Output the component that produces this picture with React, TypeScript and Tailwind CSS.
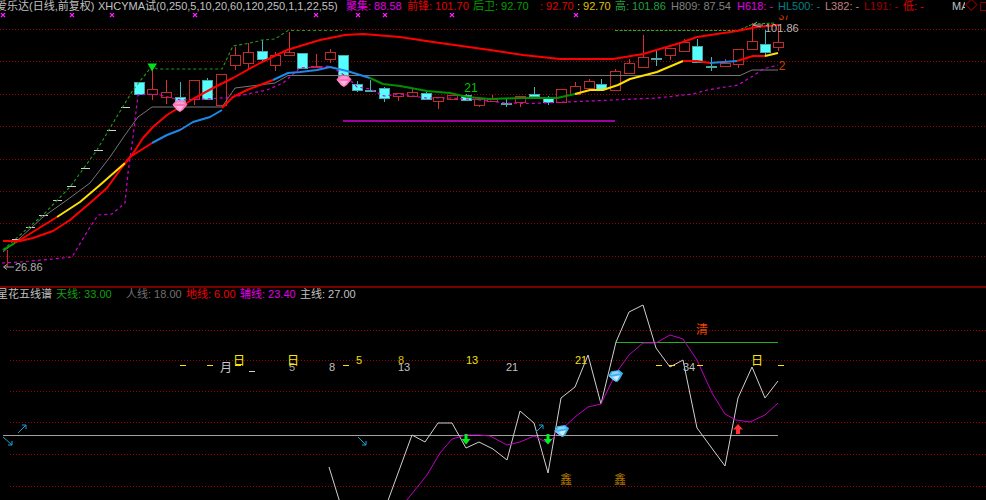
type P = [number, number];
const pts = (a: P[]) => a.map((p) => p.join(",")).join(" ");

const topGrid = [29.5, 61.5, 94.5, 126.5, 159.5, 191.5, 223.5, 256.5];
const lowGrid = [330.5, 360.5, 391.5, 422.5, 454.5, 486.5];

// x, high, low, bodyTop, bodyBottom, up (red hollow) or down (cyan solid)
const candles: [number, number, number, number, number, 0 | 1][] = [
  [139, 82, 94, 82, 94, 0],
  [152, 68, 100, 89, 94, 1],
  [166, 80, 104, 92, 97, 1],
  [180, 82, 106, 97, 105, 0],
  [194, 80, 105, 80, 99, 1],
  [207, 78, 100, 80, 99, 0],
  [221, 74, 105, 74, 105, 1],
  [235, 47, 70, 55, 65, 1],
  [248, 43, 69, 52, 63, 1],
  [262, 40, 62, 51, 59, 0],
  [275, 52, 71, 55, 65, 1],
  [289, 32, 55, 52, 55, 1],
  [302, 53, 68, 53, 68, 0],
  [316, 54, 68, 66, 67, 1],
  [330, 49, 63, 52, 59, 1],
  [343, 55, 78, 55, 78, 0],
  [357, 81, 92, 84, 90, 0],
  [370, 80, 92, 90, 91, 0],
  [384, 87, 102, 88, 98, 0],
  [398, 93, 101, 93, 96, 1],
  [412, 89, 96, 92, 96, 1],
  [426, 90, 100, 93, 99, 0],
  [438, 97, 109, 97, 101, 1],
  [452, 95, 99, 95, 99, 1],
  [466, 94, 101, 95, 100, 0],
  [479, 99, 107, 99, 105, 1],
  [492, 95, 102, 99, 101, 1],
  [506, 98, 107, 103, 104, 0],
  [520, 96, 107, 96, 102, 1],
  [534, 87, 96, 94, 96, 0],
  [548, 96, 105, 97, 102, 0],
  [561, 89, 102, 89, 102, 1],
  [575, 82, 94, 86, 94, 1],
  [589, 79, 88, 81, 88, 1],
  [601, 79, 90, 84, 89, 0],
  [615, 69, 90, 71, 90, 1],
  [629, 59, 73, 63, 73, 1],
  [643, 35, 67, 57, 67, 1],
  [656, 51, 66, 58, 59, 0],
  [670, 48, 60, 48, 55, 1],
  [684, 39, 52, 42, 51, 1],
  [697, 39, 62, 46, 62, 0],
  [711, 57, 71, 66, 67, 0],
  [725, 59, 67, 63, 66, 1],
  [738, 49, 68, 49, 64, 1],
  [752, 23, 49, 41, 49, 1],
  [765, 30, 55, 44, 52, 0],
  [778, 24, 51, 42, 47, 1],
];

const ticks: P[] = [
  [125, 107], [111, 130], [98, 150], [85, 168], [71, 186], [57, 200], [43, 215], [30, 227], [16, 239],
];

const thick: [string, P[]][] = [
  ["#ff0000", [[3, 241], [20, 241], [33, 238], [53, 231], [70, 220], [90, 203], [107, 188], [120, 170], [132, 155], [143, 138], [153, 127], [167, 115], [180, 107], [193, 99], [213, 88], [233, 78], [260, 63], [287, 50], [320, 40], [345, 35], [363, 34], [400, 37], [433, 42], [490, 50], [523, 55], [560, 59], [613, 59], [643, 54], [680, 43], [697, 37], [737, 31], [757, 27], [778, 25]]],
  ["#00a000", [[3, 250], [15, 243]]],
  ["#ff0000", [[15, 243], [57, 217]]],
  ["#ffe000", [[57, 217], [80, 202], [100, 185], [125, 163]]],
  ["#ff0000", [[125, 163], [130, 157], [152, 143]]],
  ["#1e88e5", [[152, 143], [167, 135], [180, 130], [193, 122], [210, 117], [222, 110]]],
  ["#ff0000", [[222, 108], [233, 97], [247, 90], [273, 80]]],
  ["#1e88e5", [[273, 80], [288, 73], [300, 72], [317, 70], [330, 67], [347, 71], [370, 78]]],
  ["#008f00", [[370, 78], [383, 84], [400, 86], [427, 91], [450, 93], [467, 97], [490, 99], [520, 98], [540, 98], [557, 98], [575, 94]]],
  ["#ffe000", [[575, 94], [590, 90], [603, 90], [618, 85], [630, 79], [657, 72], [683, 61]]],
  ["#ff0000", [[683, 61], [697, 61], [710, 63]]],
  ["#1e88e5", [[710, 63], [737, 61]]],
  ["#ff0000", [[737, 61], [753, 56], [765, 56]]],
  ["#ffe000", [[765, 56], [778, 53]]],
];

const grayLine: P[] = [[3, 252], [20, 238], [43, 217], [67, 200], [90, 183], [110, 157], [125, 135], [138, 117], [152, 107], [222, 107], [235, 88], [275, 83], [288, 75.5], [740, 75.5], [752, 70], [778, 70]];
const greenDash: P[] = [[3, 250], [20, 235], [43, 215], [70, 187], [97, 150], [113, 123], [133, 90], [152, 66], [157, 69], [222, 69], [233, 46], [250, 43], [262, 40], [275, 39], [288, 30.5], [342, 30.5]];
const greenDash2: P[] = [[615, 30.5], [738, 30.5], [746, 27], [753, 24], [775, 23]];
const magentaDash: P[] = [[2, 263], [20, 262], [43, 260], [72, 257], [90, 227], [98, 215], [112, 214], [125, 203], [128, 173], [133, 137], [138, 95], [152, 94], [160, 95], [180, 100], [207, 99], [233, 97], [267, 90], [283, 83], [300, 68], [317, 67], [330, 66], [347, 77], [357, 87], [370, 89], [384, 96], [400, 94], [426, 98], [450, 98], [480, 100], [506, 103], [530, 103.5], [567, 102], [613, 100], [657, 98], [693, 94], [707, 90], [738, 85], [753, 76], [763, 69], [778, 65]];

const whiteLine1: P[] = [[329, 467], [341, 506]];
const whiteLine2: P[] = [[386, 506], [412, 435], [425, 442], [438, 423], [452, 423], [466, 448], [479, 442], [493, 449], [507, 460], [520, 411], [534, 423], [548, 473], [561, 398], [575, 387], [588, 355], [601, 404], [616, 342], [629, 312], [643, 305], [656, 348], [670, 367], [683, 360], [697, 428], [725, 466], [738, 398], [752, 367], [765, 398], [778, 381]];
const magentaLine: P[] = [[402, 506], [427, 475], [440, 453], [452, 439], [466, 435], [479, 435], [490, 436], [507, 445], [520, 442], [534, 436], [548, 443], [561, 430], [575, 417], [588, 407], [601, 404], [616, 373], [629, 355], [643, 343], [656, 343], [670, 335], [683, 339], [697, 360], [712, 393], [725, 414], [736, 420], [750, 422], [765, 415], [778, 403]];

const crosses = [3, 72, 112, 195, 316, 358, 385, 452, 576];

function Gem({ x, y, light, mid, dark, tilt = 0 }: { x: number; y: number; light: string; mid: string; dark: string; tilt?: number }) {
  return (
    <g transform={`translate(${x} ${y}) rotate(${tilt})`}>
      <polygon points="-7.5,-1.5 -4,-5.5 4,-5.5 7.5,-1.5 3,4 0,6 -3,4" fill={mid} />
      <polygon points="-5,-2 -2.5,-4.5 2.5,-4.5 5,-2" fill={dark} />
      <polygon points="-4,0 4,0 0,5" fill={light} opacity="0.9" />
      <polygon points="-7.5,-1.5 -4,0 0,6 -3,4" fill={dark} />
    </g>
  );
}

function Arrow({ d }: { d: string }) {
  return <path d={d} fill="none" stroke="#12a5d8" strokeWidth="1" />;
}

function Legend({ children, w, className }: { children: string; w: number; className: string }) {
  return (
    <span className={`shrink-0 whitespace-nowrap ${className}`} style={{ width: w }}>
      {children}
    </span>
  );
}

function Grid({ ys, x0 }: { ys: number[]; x0: number }) {
  return (
    <g shapeRendering="crispEdges">
      {ys.map((y) => (
        <line key={y} x1={x0} x2={986} y1={y} y2={y} stroke="#a00000" strokeWidth="1" strokeDasharray="1 2" />
      ))}
    </g>
  );
}

function Glyph({ x, y, c, className }: { x: number; y: number; c: string; className: string }) {
  return (
    <text x={x} y={y} textAnchor="middle" className={className}>
      {c}
    </text>
  );
}

export default function App() {
  return (
    <div className="w-[986px] h-[500px] bg-black overflow-hidden flex flex-col font-['Liberation_Sans','Noto_Sans_CJK_SC',sans-serif] text-[11px] leading-[13px]">
      <div className="h-[286px] flex flex-col">
        <div className="h-[13px] flex shrink-0">
          <Legend w={102} className="ml-[-4px] text-[#c0c0c0]">爱乐达(日线,前复权)</Legend>
          <Legend w={248} className="text-[#c0c0c0]">XHCYMA试(0,250,5,10,20,60,120,250,1,1,22,55)</Legend>
          <Legend w={61} className="text-[#e000e0]">聚集: 88.58</Legend>
          <Legend w={66} className="text-[#e00000]">前锋: 101.70</Legend>
          <Legend w={67} className="text-[#00a000]">后卫: 92.70</Legend>
          <Legend w={37} className="text-[#e00000]">: 92.70</Legend>
          <Legend w={38} className="text-[#e0c000]">: 92.70</Legend>
          <Legend w={56} className="text-[#20a040]">高: 101.86</Legend>
          <Legend w={66} className="text-[#808080]">H809: 87.54</Legend>
          <Legend w={41} className="text-[#e000e0]">H618: -</Legend>
          <Legend w={47} className="text-[#008080]">HL500: -</Legend>
          <Legend w={39} className="text-[#c08080]">L382: -</Legend>
          <Legend w={39} className="text-[#a00000]">L191: -</Legend>
          <Legend w={49} className="text-[#e00000]">低: -</Legend>
          <Legend w={13} className="overflow-hidden text-[#c0c0c0]">MA</Legend>
          <Legend w={15} className="text-[12px] text-[#e00000]">◇</Legend>
          <Legend w={6} className="text-[14px] text-[#e00000]">□</Legend>
        </div>
        <svg className="flex-1 w-full" viewBox="0 13 986 273" width="986" height="273">
          <Grid ys={topGrid} x0={0} />
          {crosses.map((x) => (
            <path key={x} d={`M${x - 2} 13 L${x + 2} 17 M${x + 2} 13 L${x - 2} 17`} stroke="#ff20ff" strokeWidth="1.2" />
          ))}
          <g shapeRendering="crispEdges">
            {candles.map(([x, hi, lo, t, b, up], i) => {
              const cx = Math.round(x) + 0.5;
              const color = up ? "#c42a2a" : "#49a8a8";
              return (
                <g key={i}>
                  <line x1={cx} x2={cx} y1={hi} y2={lo} stroke={up ? "#d83030" : "#3fb8b8"} />
                  <rect
                    x={cx - 5}
                    y={t + 0.5}
                    width={10}
                    height={Math.max(b - t, 1)}
                    fill={up ? "#000" : "#55ffff"}
                    stroke={color}
                  />
                </g>
              );
            })}
            {ticks.map(([x, y]) => (
              <line key={x} x1={x - 4.5} x2={x + 4.5} y1={y + 0.5} y2={y + 0.5} stroke="#d0d0d0" />
            ))}
            <line x1={7.5} x2={7.5} y1={250} y2={267} stroke="#d02020" />
          </g>
          <polyline points={pts(grayLine)} fill="none" stroke="#767676" strokeWidth="1" />
          <polyline points={pts(greenDash)} fill="none" stroke="#1f9a1f" strokeWidth="1.1" strokeDasharray="3 2.5" />
          <polyline points={pts(greenDash2)} fill="none" stroke="#20b020" strokeWidth="1" strokeDasharray="3 1.5" />
          <polyline points={pts(magentaDash)} fill="none" stroke="#d000d0" strokeWidth="1.2" strokeDasharray="3 3" />
          {thick.map(([c, p], i) => (
            <polyline key={i} points={pts(p)} fill="none" stroke={c} strokeWidth="2" strokeLinejoin="round" />
          ))}
          <rect x={343} y={120} width={272} height={2} fill="#a000a0" />
          <polygon points="147.5,63.5 157,63.5 152,71.5" fill="#00e020" />
          <Gem x={180} y={106} light="#ffc0e0" mid="#ff70b8" dark="#ff98d0" />
          <Gem x={344} y={81} light="#ffc0e0" mid="#ff70b8" dark="#ff98d0" />
          <text x={471} y={92} textAnchor="middle" className="text-[12px] fill-[#00c000]">21</text>
          <text x={784} y={20} textAnchor="middle" className="text-[10px] fill-[#e04000]">37</text>
          <rect x={776} y={13} width={16} height={2.5} fill="#000" />
          <text x={765} y={32} className="text-[11px] fill-[#b8b8b8]">101.86</text>
          <text x={782} y={70} textAnchor="middle" className="text-[12px] fill-[#d04000]">2</text>
          <path d="M14 267 H4 M7 264.5 L3.5 267 L7 269.5" stroke="#a8a8a8" fill="none" />
          <text x={15} y={271} className="text-[11px] fill-[#b0b0b0]">26.86</text>
          <path d="M761 27 L753 25 L757 22 M753 25 H763" stroke="#a8a8a8" fill="none" />
        </svg>
      </div>
      <div className="h-[2px] shrink-0 bg-[#7a0000]" />
      <div className="h-[13px] flex shrink-0 ml-[-3px]">
        <Legend w={59} className="text-[#c0c0c0]">星花五线谱</Legend>
        <Legend w={70} className="text-[#10a010]">天线: 33.00</Legend>
        <Legend w={60} className="text-[#707070]">人线: 18.00</Legend>
        <Legend w={54} className="text-[#f00000]">地线: 6.00</Legend>
        <Legend w={60} className="text-[#e000e0]">辅线: 23.40</Legend>
        <Legend w={60} className="text-[#c0c0c0]">主线: 27.00</Legend>
      </div>
      <svg className="flex-1 w-full" viewBox="0 301 986 199" width="986" height="199">
        <Grid ys={lowGrid} x0={10} />
        <line x1={3} x2={778} y1={435.5} y2={435.5} stroke="#a0a0a0" shapeRendering="crispEdges" />
        <line x1={616} x2={778} y1={342.5} y2={342.5} stroke="#20b020" shapeRendering="crispEdges" />
        <polyline points={pts(whiteLine1)} fill="none" stroke="#d0d0d0" strokeWidth="1" />
        <polyline points={pts(whiteLine2)} fill="none" stroke="#d0d0d0" strokeWidth="1" />
        <polyline points={pts(magentaLine)} fill="none" stroke="#c000c0" strokeWidth="1" />

        <Arrow d="M18 433 L26 425 M22 425 h4 v4" />
        <Arrow d="M3 437 L12 445 M8 445 h4 v-4" />
        <Arrow d="M358 437 L366 445 M362 445 h4 v-4" />
        <Arrow d="M536 432 L543 425 M539 425 h4 v4" />

        <polygon points="464.5,434 467.5,434 467.5,439 470.5,439 466,444.5 461.5,439 464.5,439" fill="#00f020" />
        <polygon points="546.5,434 549.5,434 549.5,439 552.5,439 548,444.5 543.5,439 546.5,439" fill="#00f020" />
        <polygon points="738,424 743,429.5 740,429.5 740,434 736,434 736,429.5 733,429.5" fill="#ff3030" />

        <Gem x={562} y={431} tilt={-10} light="#d8f2ff" mid="#3fb0f0" dark="#8ad4fa" />
        <Gem x={616} y={376} tilt={-10} light="#d8f2ff" mid="#3fb0f0" dark="#8ad4fa" />

        <g shapeRendering="crispEdges">
          {[183, 210, 238, 346, 659, 672, 700, 781].map((x) => (
            <line key={x} x1={x - 3} x2={x + 3} y1={365.5} y2={365.5} stroke="#ffe000" />
          ))}
          <line x1={248.5} x2={254.5} y1={371.5} y2={371.5} stroke="#d0d0d0" />
        </g>

        <Glyph x={226} y={372} c="月" className="text-[12px] fill-[#c8c8c8]" />
        <Glyph x={292} y={371} c="5" className="text-[11px] fill-[#a8a8a8]" />
        <Glyph x={332} y={371} c="8" className="text-[11px] fill-[#c0c0c0]" />
        <Glyph x={404} y={371} c="13" className="text-[11px] fill-[#c0c0c0]" />
        <Glyph x={512} y={371} c="21" className="text-[11px] fill-[#c0c0c0]" />
        <Glyph x={689} y={371} c="34" className="text-[11px] fill-[#c0c0c0]" />

        <Glyph x={239} y={365} c="日" className="text-[12px] fill-[#ffe800]" />
        <Glyph x={293} y={365} c="日" className="text-[12px] fill-[#ffe800]" />
        <Glyph x={757} y={365} c="日" className="text-[12px] fill-[#ffe800]" />
        <Glyph x={359} y={364} c="5" className="text-[11px] fill-[#f0e000]" />
        <Glyph x={401} y={364} c="8" className="text-[11px] fill-[#d8c000]" />
        <Glyph x={472} y={364} c="13" className="text-[11px] fill-[#f0e000]" />
        <Glyph x={581} y={364} c="21" className="text-[11px] fill-[#f0e000]" />

        <Glyph x={702} y={334} c="清" className="text-[12px] fill-[#f04000]" />
        <Glyph x={566} y={484} c="鑫" className="text-[12px] fill-[#b87c00]" />
        <Glyph x={620} y={484} c="鑫" className="text-[12px] fill-[#b87c00]" />
      </svg>
    </div>
  );
}
